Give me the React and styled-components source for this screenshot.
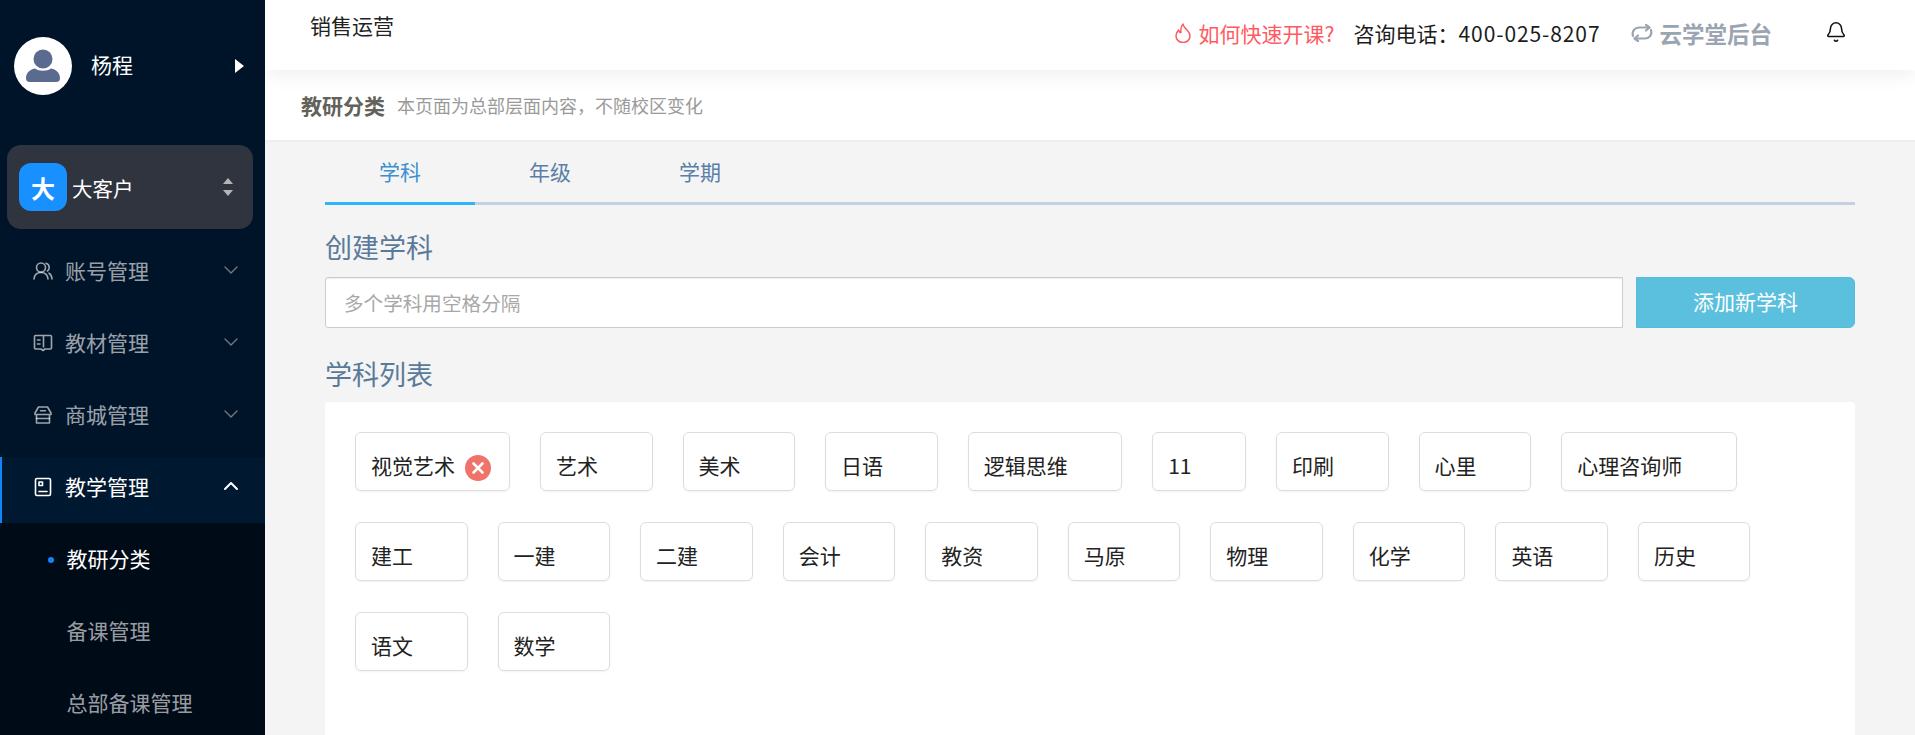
import React from "react";
import styled, { createGlobalStyle } from "styled-components";
import { Bell, ChevronDown, ChevronUp } from "lucide-react";

const GlobalStyle = createGlobalStyle`
  html, body {
    margin: 0;
    height: 735px;
    overflow: hidden;
    background: #f4f4f4;
    font-family: "Noto Sans CJK SC", "Noto Sans", sans-serif;
  }
  * { box-sizing: border-box; }
`;

const Page = styled.div`
  display: flex;
  width: 1915px;
  height: 735px;
  overflow: hidden;
`;

/* sidebar */
const Sidebar = styled.aside`
  flex: 0 0 265px;
  background: #001429;
  padding-top: 37px;
  display: flex;
  flex-direction: column;
  overflow: hidden;
`;
const UserRow = styled.div`
  flex: none;
  display: flex;
  align-items: center;
  height: 58px;
  padding: 0 21px 0 14px;
  margin-bottom: 50px;
`;
const Avatar = styled.div`
  width: 58px;
  height: 58px;
  border-radius: 50%;
  background: #fff;
  display: flex;
  align-items: center;
  justify-content: center;
`;
const UserName = styled.span`
  margin: -4px 0 0 19px;
  flex: 1;
  font-size: 21px;
  color: #fff;
`;
const Caret = styled.span`
  width: 0;
  height: 0;
  border-left: 9px solid #fff;
  border-top: 7.5px solid transparent;
  border-bottom: 7.5px solid transparent;
`;
const OrgCard = styled.div`
  flex: none;
  display: flex;
  align-items: center;
  height: 84px;
  margin: 0 12px 0 7px;
  padding: 0 20px 0 12px;
  background: #30343f;
  border-radius: 14px;
`;
const OrgBadge = styled.div`
  width: 48px;
  height: 48px;
  padding-top: 1px;
  border-radius: 12px;
  background: #1890ff;
  color: #fff;
  font-size: 24px;
  font-weight: 700;
  display: flex;
  align-items: center;
  justify-content: center;
`;
const OrgName = styled.span`
  flex: 1;
  margin: 2px 0 0 5px;
  font-size: 20.5px;
  color: #fff;
`;
const Sorter = styled.div`
  display: flex;
  flex-direction: column;
  gap: 6px;
`;
const SortArrow = styled.span`
  width: 0;
  height: 0;
  border-left: 5px solid transparent;
  border-right: 5px solid transparent;
  ${(p) =>
    p.$up ? "border-bottom: 6px solid #b5b5b8;" : "border-top: 6px solid #b5b5b8;"}
`;
const Menu = styled.nav`
  flex: none;
  display: flex;
  flex-direction: column;
  margin-top: 6px;
`;
const MenuItem = styled.div`
  display: flex;
  align-items: center;
  height: 66px;
  margin-top: 6px;
  padding: 0 22px 9px 33px;
  color: ${(p) => (p.$active ? "#fff" : "rgba(255,255,255,.62)")};
  box-shadow: ${(p) => (p.$active ? "inset 2px 0 0 #1284f5" : "none")};
  background: ${(p) => (p.$active ? "#001931" : "transparent")};
`;
const MenuIcon = styled.svg`
  width: 20px;
  height: 20px;
  margin-top: 3px;
  flex: none;
  fill: none;
  stroke: currentColor;
  stroke-width: 1.6;
  stroke-linecap: round;
  stroke-linejoin: round;
`;
const MenuLabel = styled.span`
  flex: 1;
  margin-left: 12px;
  font-size: 21px;
`;
const SubMenu = styled.div`
  background: #000b18;
  flex: 1 0 auto;
  padding-top: 1px;
`;
const SubItem = styled.div`
  position: relative;
  height: 72px;
  display: flex;
  align-items: center;
  padding: 0 0 5px 66.5px;
  font-size: 21px;
  color: ${(p) => (p.$active ? "#fff" : "rgba(255,255,255,.62)")};
`;
const Dot = styled.span`
  position: absolute;
  left: 48px;
  top: 33px;
  width: 6px;
  height: 6px;
  border-radius: 50%;
  background: #1284f5;
`;

/* right part */
const Main = styled.div`
  flex: 1;
  min-width: 0;
  display: flex;
  flex-direction: column;
`;
const Header = styled.header`
  position: relative;
  z-index: 2;
  flex: 0 0 70px;
  display: flex;
  align-items: center;
  padding: 0 68px 10px 45px;
  background: #fff;
  box-shadow: 0 4px 20px rgba(0, 0, 0, 0.07);
`;
const HeaderTitle = styled.div`
  flex: 1;
  margin-top: -10px;
  font-size: 21px;
  color: #222;
`;
const HelpLink = styled.span`
  display: flex;
  align-items: center;
  gap: 8px;
  margin-top: 6px;
  font-size: 21px;
  color: #ff5a5f;
`;
const Phone = styled.span`
  margin: 6px 0 0 19px;
  font-size: 21px;
  color: #1c1c1c;
`;
const PhoneNumber = styled.span`
  letter-spacing: 0.9px;
`;
const Brand = styled.span`
  display: flex;
  align-items: center;
  gap: 5px;
  margin: 6px 0 0 30px;
  font-size: 22.5px;
  font-weight: 700;
  color: #9aa5b1;
`;
const BellWrap = styled.span`
  display: flex;
  margin: 4px 0 0 53px;
  color: #111;
`;
const PageBar = styled.div`
  flex: 0 0 72px;
  display: flex;
  align-items: center;
  padding: 0 0 1px 36px;
  background: #fff;
  border-bottom: 2px solid #eee;
`;
const PageTitle = styled.span`
  font-size: 21px;
  font-weight: 700;
  color: #62625a;
`;
const PageHint = styled.span`
  margin-left: 12px;
  font-size: 18px;
  color: #9a9a9a;
`;
const Content = styled.div`
  flex: 1;
  min-height: 0;
  padding: 0 60px;
  background: #f4f4f4;
  display: flex;
  flex-direction: column;
`;
const Tabs = styled.div`
  flex: none;
  display: flex;
  height: 63px;
  border-bottom: 3px solid #c3d1e0;
`;
const Tab = styled.div`
  width: 150px;
  height: 63px;
  padding-bottom: 3px;
  display: flex;
  align-items: center;
  justify-content: center;
  font-size: 21px;
  color: ${(p) => (p.$active ? "#3a90d0" : "#5b7ea8")};
  border-bottom: 3px solid ${(p) => (p.$active ? "#2fb6f8" : "transparent")};
`;
const SectionTitle = styled.h2`
  flex: none;
  margin: ${(p) => p.$top}px 0 0;
  height: 38px;
  line-height: 38px;
  font-size: 27px;
  font-weight: 400;
  color: #5a7a9a;
`;
const AddRow = styled.div`
  flex: none;
  display: flex;
  gap: 13px;
  height: 51px;
  margin-top: 11px;
`;
const Field = styled.input`
  flex: 1;
  min-width: 0;
  padding: 0 18px;
  border: 1px solid #ccc;
  border-radius: 3px 0 0 3px;
  box-shadow: inset 0 1px 1px rgba(0, 0, 0, 0.075);
  background: #fff;
  font: inherit;
  font-size: 19.6px;
  outline: none;
  &::placeholder {
    color: #a8a8a8;
    opacity: 1;
  }
`;
const AddButton = styled.button`
  flex: 0 0 219px;
  padding: 0 0 4px;
  border: 1px solid #53bcdc;
  border-radius: 0 6px 6px 0;
  background: #5bc0de;
  color: #fff;
  font: inherit;
  font-size: 21px;
`;
const TagPanel = styled.div`
  flex: 1;
  margin-top: 9px;
  padding: 30px;
  background: #fff;
  border-radius: 4px 4px 0 0;
  display: flex;
  flex-wrap: wrap;
  align-content: flex-start;
  gap: 31px 30px;
`;
const Tag = styled.div`
  position: relative;
  height: 59px;
  padding: 6px ${(p) => (p.$open ? 54 : 53.55)}px 0 15px;
  border: 1px solid #ddd;
  border-radius: 6px;
  box-shadow: 0 1px 2px rgba(0, 0, 0, 0.05);
  display: flex;
  align-items: center;
  font-size: 21px;
  color: #222;
  white-space: nowrap;
`;
const TagClose = styled.svg`
  position: absolute;
  right: 18px;
  top: 22px;
  width: 26px;
  height: 26px;
`;

const menus = [
  { label: "账号管理", icon: "users" },
  { label: "教材管理", icon: "book" },
  { label: "商城管理", icon: "store" },
  { label: "教学管理", icon: "badge", active: true },
];

const subjects = [
  "视觉艺术", "艺术", "美术", "日语", "逻辑思维", "11", "印刷", "心里", "心理咨询师",
  "建工", "一建", "二建", "会计", "教资", "马原", "物理", "化学", "英语", "历史",
  "语文", "数学",
];

function MenuGlyph({ name }) {
  return (
    <MenuIcon viewBox="0 0 20 20">
      {name === "users" && (
        <>
          <circle cx="8" cy="6.5" r="4.5" />
          <path d="M1 18c.4-4 3.200-6.500 7-6.500s6.600 2.500 7 6.500" />
          <path d="M13 2.200c2 .5 3.200 2.200 3.200 4.200 0 1.500-.7 2.800-1.800 3.600M16 12.200c1.800 1 2.800 3 3 5.800" />
        </>
      )}
      {name === "book" && (
        <>
          <path d="M10 2.500H2.500a1 1 0 0 0-1 1V15a1 1 0 0 0 1 1H8l2 1.500 2-1.500h5.500a1 1 0 0 0 1-1V3.500a1 1 0 0 0-1-1H10.500V14" />
          <path d="M4.500 7h2.500M4.500 11h2.500" />
        </>
      )}
      {name === "store" && (
        <>
          <path d="M5.500 2h9l3.500 6v1.500H2V8l3.500-6zM3.500 9.500V18h13V9.500" />
          <path d="M7.500 5.800h5M3.500 13.500h13" />
        </>
      )}
      {name === "badge" && (
        <>
          <rect x="2.500" y="1.500" width="15" height="17" rx="1.500" />
          <rect x="6" y="5" width="3.500" height="3.500" />
          <path d="M6 14.500h8" />
        </>
      )}
    </MenuIcon>
  );
}

export default function App() {
  return (
    <Page>
      <GlobalStyle />
      <Sidebar>
        <UserRow>
          <Avatar>
            <svg width="34" height="36" viewBox="0 0 34 36">
              <circle cx="17" cy="11" r="9.500" fill="#5a6b8f" />
              <path d="M0 30c0-6 6-9.500 9-9.500 2 1.500 5 2.200 8 2.200s6-.7 8-2.200c3 0 9 3.500 9 9.500 0 3-1.500 4-4 4H4c-2.500 0-4-1-4-4z" fill="#5a6b8f" />
            </svg>
          </Avatar>
          <UserName>杨程</UserName>
          <Caret />
        </UserRow>
        <OrgCard>
          <OrgBadge>大</OrgBadge>
          <OrgName>大客户</OrgName>
          <Sorter>
            <SortArrow $up />
            <SortArrow />
          </Sorter>
        </OrgCard>
        <Menu>
          {menus.map((m) => (
            <MenuItem key={m.label} $active={m.active}>
              <MenuGlyph name={m.icon} />
              <MenuLabel>{m.label}</MenuLabel>
              {m.active ? (
                <ChevronUp size={24} strokeWidth={2} />
              ) : (
                <ChevronDown size={24} strokeWidth={1.4} opacity={0.7} />
              )}
            </MenuItem>
          ))}
        </Menu>
        <SubMenu>
          <SubItem $active>
            <Dot />
            教研分类
          </SubItem>
          <SubItem>备课管理</SubItem>
          <SubItem>总部备课管理</SubItem>
        </SubMenu>
      </Sidebar>
      <Main>
        <Header>
          <HeaderTitle>销售运营</HeaderTitle>
          <HelpLink>
            <svg width="16" height="20" viewBox="0 0 16 20" fill="none" stroke="#ff5a5f" strokeWidth="1.500" strokeLinejoin="round">
              <path d="M8 1c.5 3 2 4 4 6s3 3.500 3 6a7 6.500 0 0 1-14 0c0-3 1.500-4.500 2.500-6 .5 1.500 1.500 2.500 2.500 2.500C5.500 6 6 3 8 1z" />
            </svg>
            如何快速开课?
          </HelpLink>
          <Phone>
            咨询电话：<PhoneNumber>400-025-8207</PhoneNumber>
          </Phone>
          <Brand>
            <svg width="24" height="18" viewBox="0 0 24 18" fill="none" stroke="#9aa5b1" strokeWidth="2.200" strokeLinecap="round" strokeLinejoin="round">
              <path d="M3 12C1.500 7 5 3.500 9 3.500h10" />
              <path d="M16 1l3.500 2.500L16 6.500" />
              <path d="M21 6c1.500 5-2 8.500-6 8.500H5" />
              <path d="M8 11.500l-3.500 3L8 17" />
            </svg>
            云学堂后台
          </Brand>
          <BellWrap>
            <Bell size={22} strokeWidth={1.7} />
          </BellWrap>
        </Header>
        <PageBar>
          <PageTitle>教研分类</PageTitle>
          <PageHint>本页面为总部层面内容，不随校区变化</PageHint>
        </PageBar>
        <Content>
          <Tabs>
            <Tab $active>学科</Tab>
            <Tab>年级</Tab>
            <Tab>学期</Tab>
          </Tabs>
          <SectionTitle $top={23}>创建学科</SectionTitle>
          <AddRow>
            <Field placeholder="多个学科用空格分隔" />
            <AddButton>添加新学科</AddButton>
          </AddRow>
          <SectionTitle $top={27}>学科列表</SectionTitle>
          <TagPanel>
            {subjects.map((s, i) => (
              <Tag key={s} $open={i === 0}>
                {s}
                {i === 0 && (
                  <TagClose viewBox="0 0 26 26">
                    <circle cx="13" cy="13" r="13" fill="#f0736b" />
                    <path d="M8.500 8.500l9 9M17.500 8.500l-9 9" stroke="#fff" strokeWidth="2.600" strokeLinecap="round" />
                  </TagClose>
                )}
              </Tag>
            ))}
          </TagPanel>
        </Content>
      </Main>
    </Page>
  );
}
